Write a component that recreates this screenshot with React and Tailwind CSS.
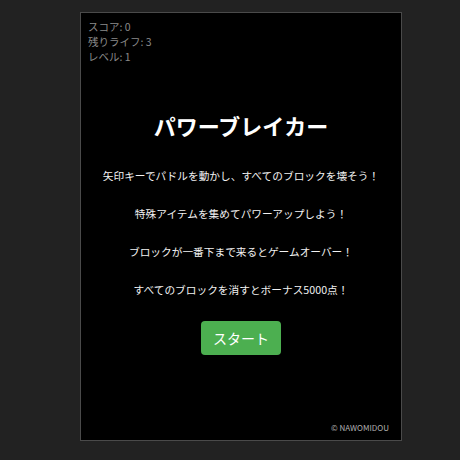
export default function App() {
  const lines = [
    "矢印キーでパドルを動かし、すべてのブロックを壊そう！",
    "特殊アイテムを集めてパワーアップしよう！",
    "ブロックが一番下まで来るとゲームオーバー！",
    "すべてのブロックを消すとボーナス5000点！",
  ];

  return (
    <div
      className="w-[460px] h-[460px] bg-[#222222] pt-[12px] pl-[80px]"
      style={{ fontFamily: '"Noto Sans CJK JP", "Liberation Sans", sans-serif' }}
    >
      <div className="relative w-[322px] h-[429px] bg-black border border-[#4a4a4a] flex flex-col">
        {/* stats */}
        <div className="pt-[6px] pl-[7px] text-[10.5px] leading-[15px] text-[#8a8a8a]">
          <div>スコア: 0</div>
          <div>残りライフ: 3</div>
          <div>レベル: 1</div>
        </div>

        {/* start screen */}
        <div className="flex flex-col items-center text-white mt-[46px]">
          <h1 className="text-[22px] font-bold leading-[30px]">パワーブレイカー</h1>
          <div className="mt-[28px] flex flex-col items-center gap-[22px] text-[10.7px] leading-[16px] text-[#f2f2f2]">
            {lines.map((t) => (
              <p key={t}>{t}</p>
            ))}
          </div>
          <button className="mt-[23px] w-[80px] h-[34px] rounded-[4px] bg-[#4caf50] text-[14px] text-white">
            スタート
          </button>
        </div>

        <div className="absolute right-[12px] bottom-[6px] text-[8px] text-[#b0b0b0]">
          © NAWOMIDOU
        </div>
      </div>
    </div>
  );
}
